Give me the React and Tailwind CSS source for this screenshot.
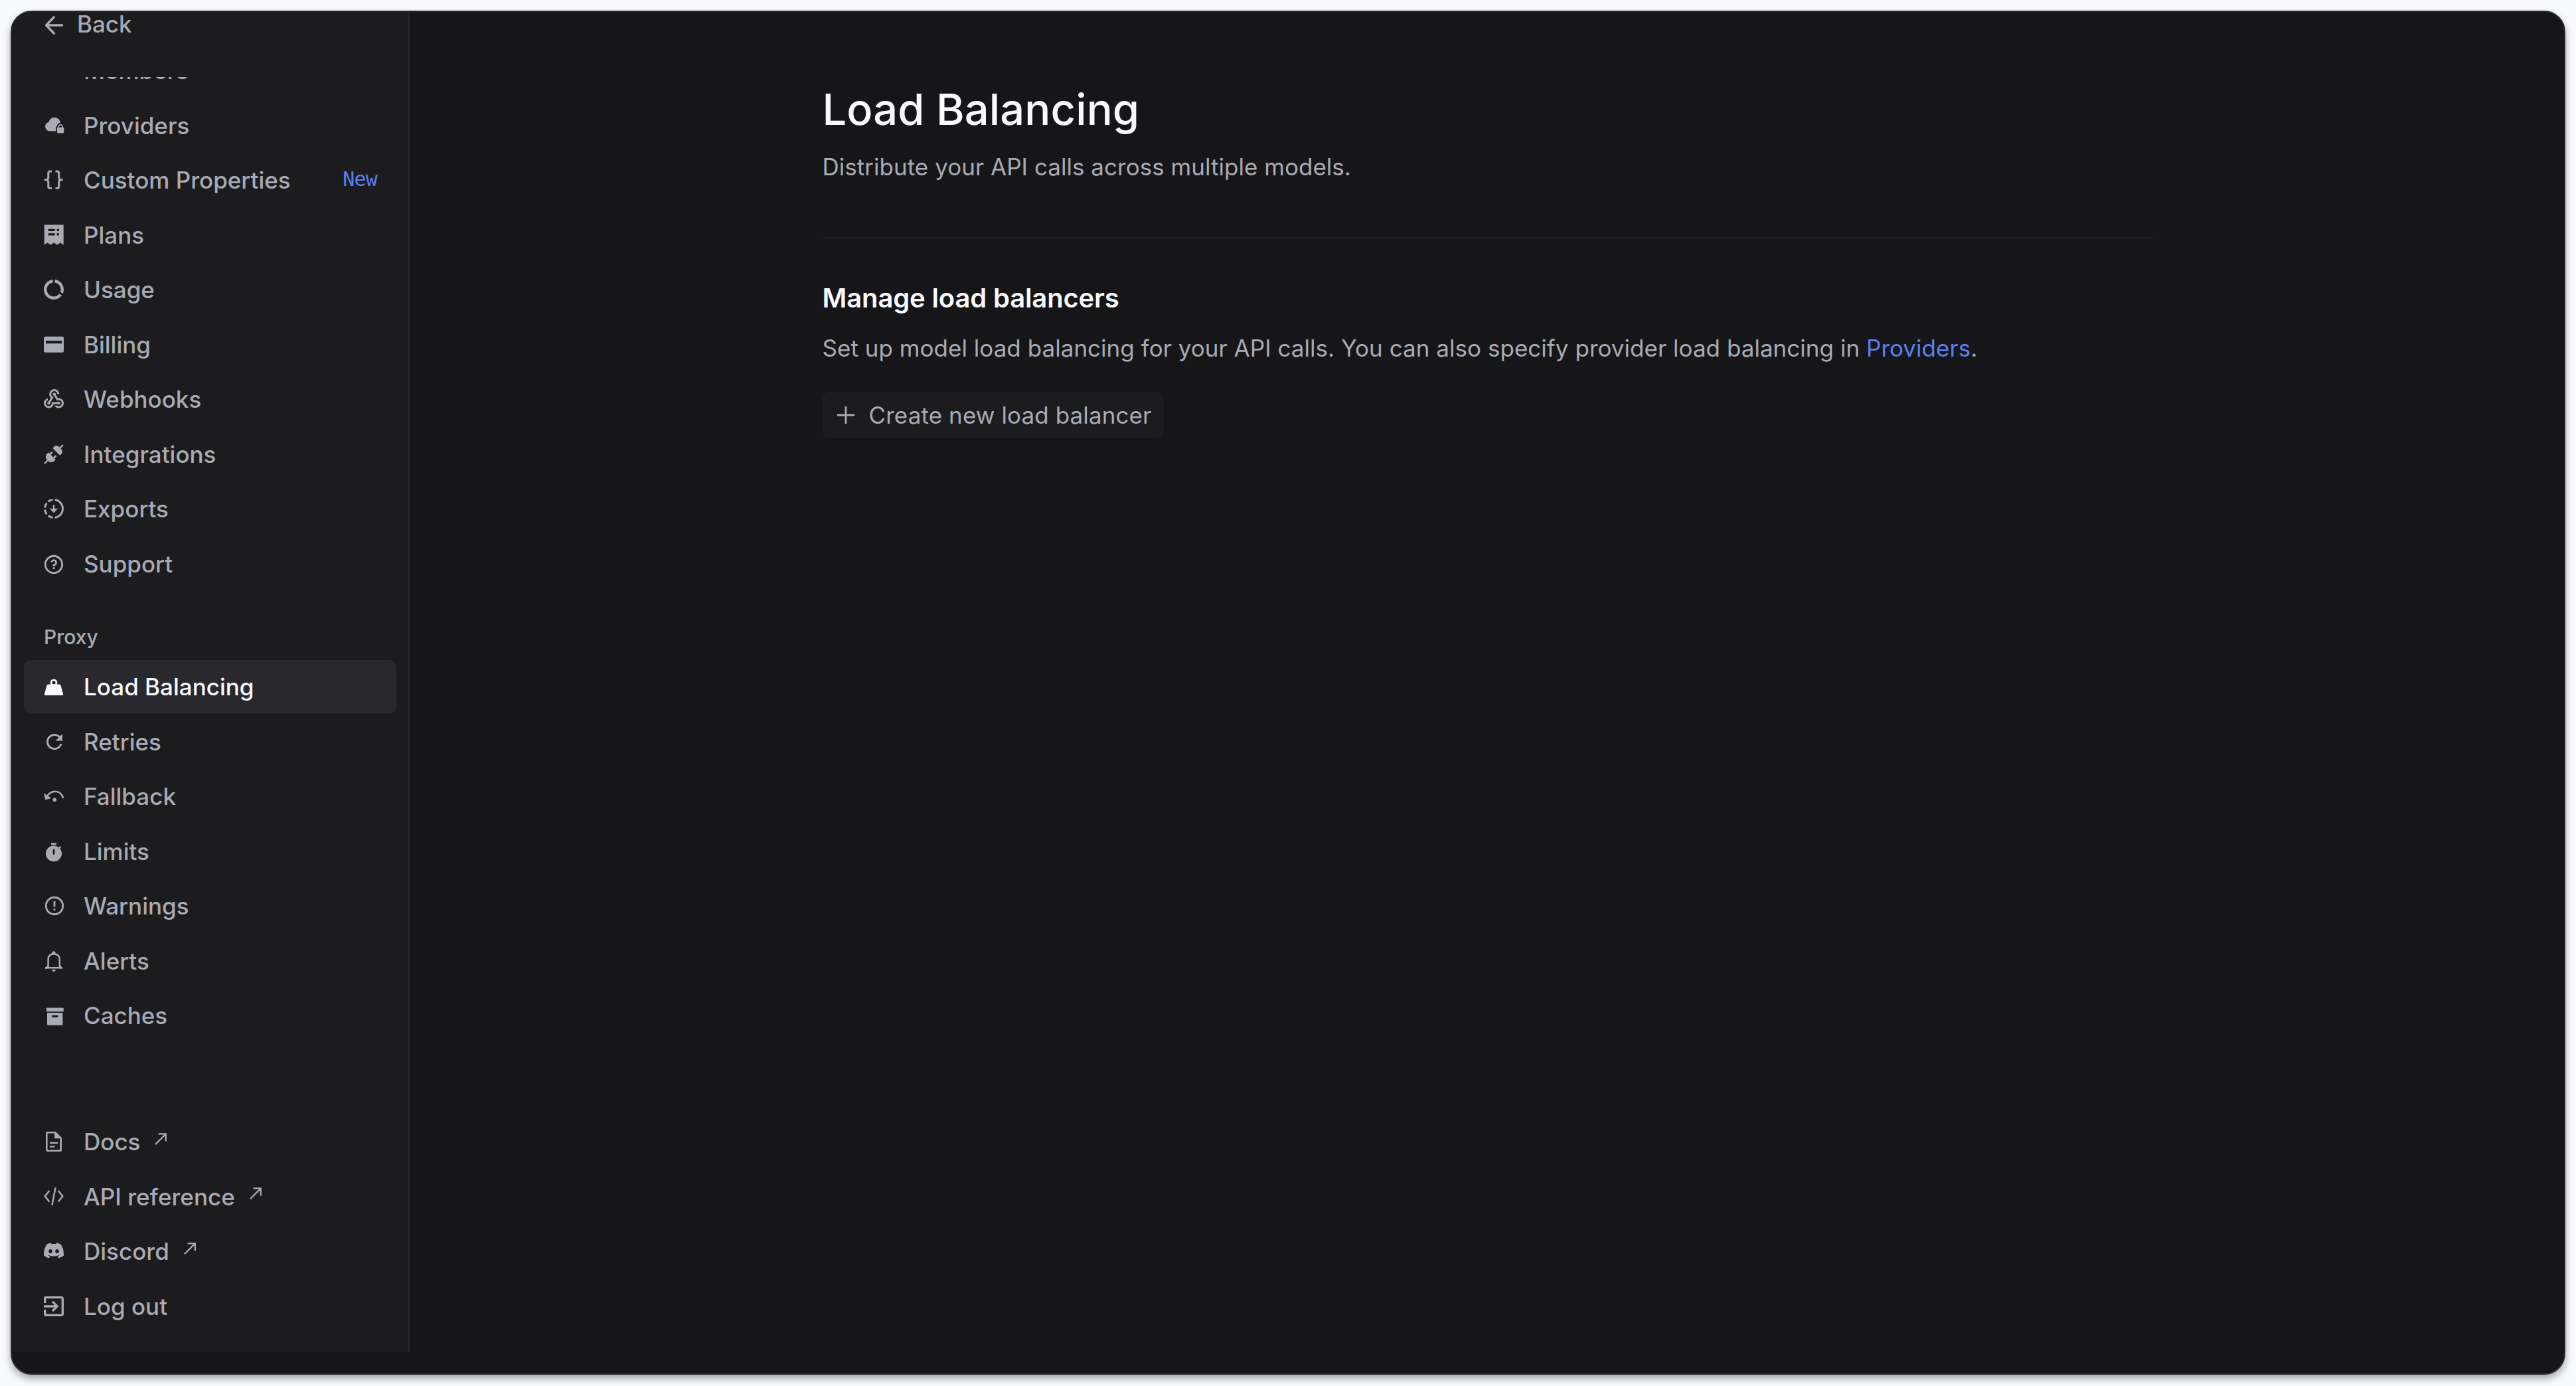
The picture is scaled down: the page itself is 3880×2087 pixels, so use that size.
import React from 'react';
import { BsDiscord } from 'react-icons/bs';
import { MdDataUsage, MdExitToApp, MdRefresh, MdTimer, MdWebhook } from 'react-icons/md';
import { RiErrorWarningLine, RiQuestionLine } from 'react-icons/ri';

const Glyph = ({ children, className = '' }) => (
  <svg className={`w-[30px] h-[30px] flex-shrink-0 overflow-visible ${className}`} viewBox="0 0 30 30" fill="currentColor">
    {children}
  </svg>
);

const ArrowLeftIcon = () => (
  <Glyph className="translate-y-[2px]">
    <path d="M15.3 2.8 3.6 15l11.7 12.2M3.6 15h24" fill="none" stroke="currentColor" strokeWidth="3.4" strokeLinecap="round" strokeLinejoin="round" />
  </Glyph>
);

const CloudLockIcon = () => (
  <Glyph>
    <path d="M9 23.5a6.9 6.9 0 0 1-6.9-6.9c0-3.4 2.2-5.9 5.3-6.6C8.600 5.600 11.800 2.700 16 2.700c4.900 0 8.700 3.700 9 8.600l-2 12.200z" />
    <path d="M18.200 29V18.500c0-1.300.9-2.200 1.500-2.500.4-3.200 2.400-5.100 5.300-5.100s5 2 5.300 5.100V29z" fill="#1c1c1e" />
    <rect x="20" y="17.800" width="10.200" height="8.600" rx="1.400" />
    <path d="M22.100 18.500v-1.700a2.900 2.900 0 0 1 5.800 0v1.700" fill="none" stroke="currentColor" strokeWidth="1.700" />
  </Glyph>
);

const BracesIcon = () => (
  <Glyph>
    <path
      d="M12 2H9.400Q6.800 2 6.800 4.600v6.600q0 3.600-3.600 3.600H.8h2.400q3.600 0 3.600 3.600v6.600q0 2.600 2.600 2.600H12M17.500 2h2.600q2.600 0 2.600 2.600v6.600q0 3.600 3.600 3.600h2.400-2.400q-3.600 0-3.600 3.600v6.600q0 2.600-2.600 2.600h-2.600"
      fill="none" stroke="currentColor" strokeWidth="3"
    />
  </Glyph>
);

const ReceiptIcon = () => (
  <Glyph className="translate-y-[-1px]">
    <path
      fillRule="evenodd"
      d="M.7.500h29v30.200l-4.800-3.200-4.900 3.200-4.800-3.200-4.800 3.200-4.900-3.200L.7 30.700zM6.700 6.700v3.200h10V6.700zM19.700 6.700v3.200h3.200V6.700zM6.700 13.200v3.200h10v-3.200zM19.700 13.200v3.200h3.200v-3.200z"
    />
  </Glyph>
);

const CardIcon = () => (
  <Glyph>
    <path fillRule="evenodd" d="M2.500 2.800h25A2.500 2.500 0 0 1 30 5.300v19a2.500 2.500 0 0 1-2.500 2.500h-25A2.500 2.500 0 0 1 0 24.300v-19a2.500 2.500 0 0 1 2.500-2.500zM3 9v4.300h24.200V9z" />
  </Glyph>
);

const PlugsIcon = () => (
  <Glyph>
    <g transform="translate(15 15) rotate(45)">
      <path d="M-1.200-19.800h2.400v6.300h3.300l3.300 3.300v3.700q0 1.300-1.300 1.300h-13q-1.300 0-1.300-1.300v-3.700l3.300-3.300h3.300z" />
      <path d="M-5.200-1h2.600v4.700h5.200V-1h2.600v4.700h1.300q1.200 0 1.200 1.200v3.700l-3.400 4.300h-3.100v6.900h-2.400v-6.900h-3.100l-3.400-4.300V4.900q0-1.200 1.200-1.200h1.300z" />
    </g>
  </Glyph>
);

const ExportIcon = () => (
  <svg className="w-9 h-9" viewBox="0 0 24 24" fill="currentColor">
    <path d="M11.200 8.100h1.600v3.700H16l-4 4.500-4-4.500h3.200zM11 4.070V2.050c-2.010.2-3.840 1-5.320 2.210L7.100 5.690A7.940 7.940 0 0 1 11 4.070zM5.690 7.100 4.260 5.680A9.950 9.950 0 0 0 2.050 11h2.020c.18-1.460.76-2.790 1.620-3.900zM4.070 13H2.050c.2 2.010 1 3.840 2.210 5.320l1.430-1.430A7.870 7.870 0 0 1 4.070 13zM5.680 19.740A9.980 9.980 0 0 0 11 21.950v-2.020a7.940 7.940 0 0 1-3.900-1.620zM22 12c0 5.160-3.920 9.420-8.950 9.950v-2.020C16.970 19.410 20 16.050 20 12s-3.030-7.410-6.950-7.930V2.050C18.080 2.580 22 6.840 22 12z" />
  </svg>
);

const WeightIcon = () => (
  <Glyph>
    <circle cx="15" cy="8.800" r="4" fill="none" stroke="currentColor" strokeWidth="2.700" />
    <path d="M6.600 11.600h16.800q1.800 0 2.200 1.700l3.400 12.400q.5 2.400-1.900 2.400H2.900q-2.400 0-1.900-2.400l3.400-12.400q.4-1.700 2.200-1.700z" />
  </Glyph>
);

const FallbackIcon = () => (
  <Glyph>
    <path d="M0 10.300 11.400 18 2.300 20.300z" />
    <path d="M4.500 15.500Q9.500 7.800 17 7.800q9.300 0 12.300 10.300" fill="none" stroke="currentColor" strokeWidth="2.500" />
    <circle cx="16.300" cy="20.300" r="2.800" />
  </Glyph>
);

const BellIcon = () => (
  <Glyph>
    <path d="M2 25.200h26M6.600 25V12.800Q6.600 4.500 15 4.500t8.800 8.300V25" fill="none" stroke="currentColor" strokeWidth="2.500" />
    <path d="M2 26.400v-1.600l4.500-3.600v5.200zM28 26.400v-1.600l-4.200-3.600v5.200z" />
    <circle cx="15" cy="2.900" r="2.600" />
    <path d="M12 28h6q-.6 2.900-3 2.900T12 28z" />
  </Glyph>
);

const ArchiveIcon = () => (
  <Glyph>
    <rect x="3.800" y="3.400" width="26" height="5.800" rx="1.300" />
    <path fillRule="evenodd" d="M5 11h23.400v17.400q0 1.400-1.400 1.400H6.400Q5 29.800 5 28.400zM12 14.700v1.500q0 1.800 1.800 1.800h5.800q1.800 0 1.800-1.800v-1.500z" />
  </Glyph>
);

const DocIcon = () => (
  <Glyph>
    <path fillRule="evenodd" d="M5 0h13l9 9.200V28q0 2-2 2H5q-2 0-2-2V2q0-2 2-2zM5.600 2.600v24.800h18.700V10.200h-8.200V2.600zM9 15.800h12v2.400H9zM9 21.400h7.700v2.300H9z" />
  </Glyph>
);

const CodeIcon = () => (
  <Glyph>
    <path d="M8.400 6 1.800 14.300l6.600 8.300M21.800 6l6.500 8.300-6.500 8.300M17.600 1.200l-5.200 26.300" fill="none" stroke="currentColor" strokeWidth="2.500" />
  </Glyph>
);

const ExternalArrow = () => (
  <svg className="w-[18px] h-[18px] ml-[22px] mb-[9px]" viewBox="0 0 18 18" fill="none" stroke="currentColor" strokeWidth="2.300">
    <path d="M1 17.200 16.800 1.400M5.600 1.300h11.200v11.200" />
  </svg>
);

const MAIN_ITEMS = [
  { label: 'Members' },
  { label: 'Providers', icon: <CloudLockIcon /> },
  { label: 'Custom Properties', icon: <BracesIcon />, badge: 'New' },
  { label: 'Plans', icon: <ReceiptIcon /> },
  { label: 'Usage', icon: <MdDataUsage className="w-9 h-9" /> },
  { label: 'Billing', icon: <CardIcon /> },
  { label: 'Webhooks', icon: <MdWebhook className="w-9 h-9" /> },
  { label: 'Integrations', icon: <PlugsIcon /> },
  { label: 'Exports', icon: <ExportIcon /> },
  { label: 'Support', icon: <RiQuestionLine className="w-[34px] h-[34px] translate-y-px" /> },
];

const PROXY_ITEMS = [
  { label: 'Load Balancing', icon: <WeightIcon />, active: true },
  { label: 'Retries', icon: <MdRefresh className="w-9 h-9 translate-x-px" /> },
  { label: 'Fallback', icon: <FallbackIcon /> },
  { label: 'Limits', icon: <MdTimer className="w-8 h-8 translate-y-[2px]" /> },
  { label: 'Warnings', icon: <RiErrorWarningLine className="w-[34px] h-[34px] translate-x-px" /> },
  { label: 'Alerts', icon: <BellIcon /> },
  { label: 'Caches', icon: <ArchiveIcon /> },
];

const FOOTER_ITEMS = [
  { label: 'Docs', icon: <DocIcon />, external: true },
  { label: 'API reference', icon: <CodeIcon />, external: true },
  { label: 'Discord', icon: <BsDiscord className="w-[30px] h-[30px] translate-y-[-1px]" />, external: true },
  { label: 'Log out', icon: <MdExitToApp className="w-10 h-10" /> },
];

const NavItem = ({ label, icon, badge, active, external }) => (
  <a
    className={`flex items-center h-20 flex-shrink-0 pl-[30px] pr-[29px] rounded-[10px] font-medium ${active ? 'bg-[#29282d] text-[#fafafc]' : ''}`}
  >
    <span className="flex items-center justify-center w-[30px] mr-[30px]">
      <span className="flex-shrink-0">{icon}</span>
    </span>
    <span>{label}</span>
    {external && <ExternalArrow />}
    {badge && (
      <span className="ml-auto mb-[3px] font-['DejaVu_Sans_Mono',monospace] text-[30px] tracking-[-0.8px] font-normal text-[#5a7ff0]">{badge}</span>
    )}
  </a>
);

const NavList = ({ items, className = '' }) => (
  <nav className={`flex flex-col gap-[2.5px] ${className}`}>
    {items.map(item => <NavItem key={item.label} {...item} />)}
  </nav>
);

const Sidebar = () => (
  <aside className="flex flex-col w-[599px] h-[2018px] flex-shrink-0 bg-[#1c1c1e] border-r-2 border-[#29292d] pl-[18px] pr-[18px]">
    <div className="flex items-center h-9 pl-[30px] mb-[62px] flex-shrink-0 font-medium">
      <ArrowLeftIcon />
      <span className="ml-5">Back</span>
    </div>
    {/* Scrolled list, the first row is partly hidden under the back link */}
    <div className="h-[1563px] overflow-hidden flex-shrink-0">
      <NavList items={MAIN_ITEMS} className="-mt-[50px]" />
      <div className="pl-[30px] mt-[50px] mb-[15.500px] leading-[40px] text-[30px] font-medium">Proxy</div>
      <NavList items={PROXY_ITEMS} />
    </div>
    <NavList items={FOOTER_ITEMS} />
  </aside>
);

const App = () => (
  <div className="w-[3880px] h-[2087px] bg-[#f9fafc] pt-4 pl-4 overflow-hidden font-['Inter',sans-serif] text-[35px] leading-[50px] text-[#a9aab4]">
    <div className="flex w-[3848px] h-[2054px] bg-[#161618] border-2 border-[#2a2a31] rounded-[32px] overflow-hidden shadow-[0_6px_12px_rgba(0,0,0,0.35)]">
      <Sidebar />
      <main className="flex-1 pl-[621.5px] pt-[107px]">
        <div className="w-[2005px]">
          <h1 className="text-[65px] leading-[80px] tracking-[0.1px] font-medium text-[#fafafc]">Load Balancing</h1>
          <p className="mt-[21px] tracking-[0.03px]">Distribute your API calls across multiple models.</p>
          <hr className="mt-[81px] border-0 h-[3px] bg-[#1c1c1e]" />
          <h2 className="mt-[59px] text-[40px] leading-[60px] tracking-[-0.15px] font-semibold text-[#fafafc]">Manage load balancers</h2>
          <p className="mt-[20px] tracking-[0.03px]">
            Set up model load balancing for your API calls. You can also specify provider load balancing in{' '}
            <a className="text-[#5a7ff0]">Providers</a>.
          </p>
          <button className="flex items-center h-[70px] w-[514px] mt-[41px] pl-[22px] rounded-[10px] bg-[#1c1c1e] tracking-[0.1px]">
            <svg className="w-[26px] h-[26px] mr-[22px]" viewBox="0 0 26 26" fill="none" stroke="currentColor" strokeWidth="2.800">
              <path d="M13 0v26M0 13h26" />
            </svg>
            Create new load balancer
          </button>
        </div>
      </main>
    </div>
  </div>
);

export default App;
